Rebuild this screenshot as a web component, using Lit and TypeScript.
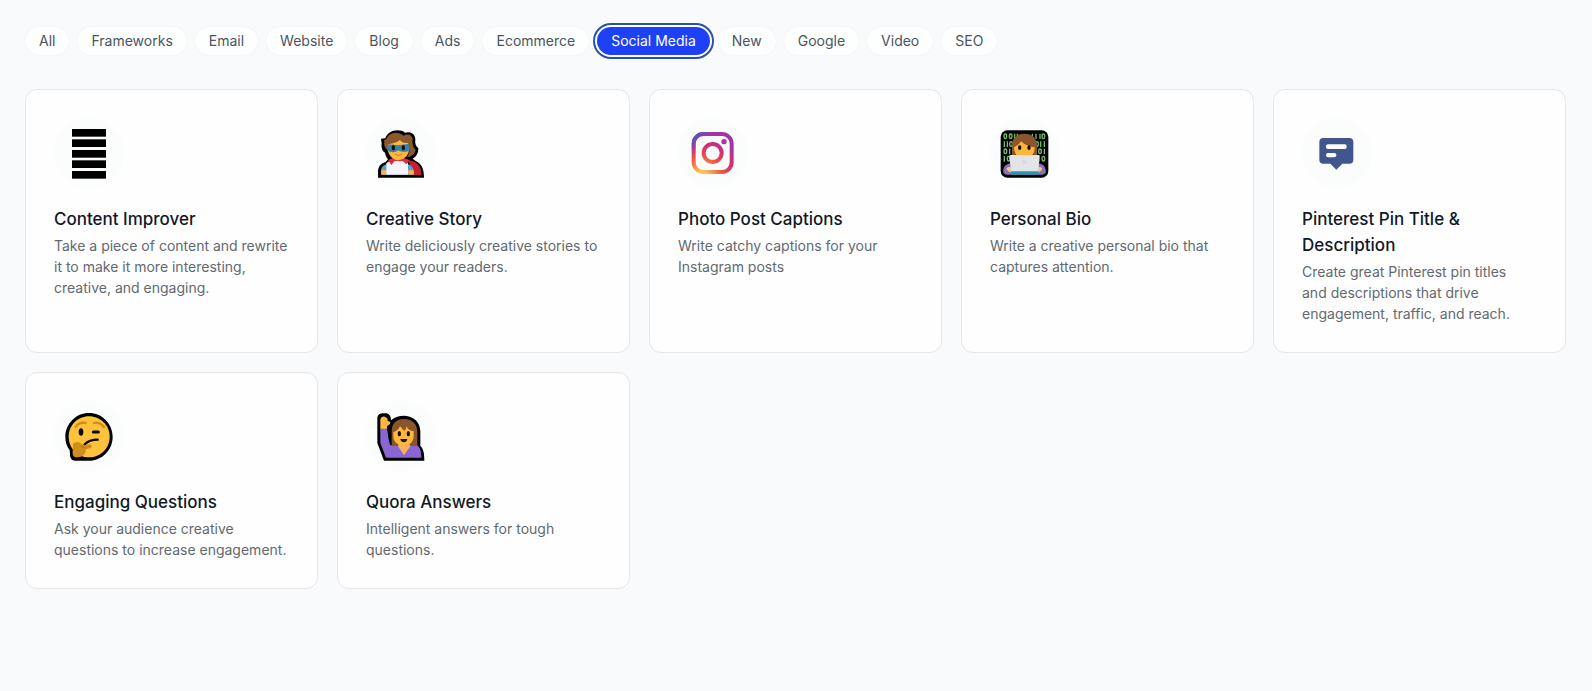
import { LitElement, html, css, svg } from "lit";
import { customElement, property, state } from "lit/decorators.js";
import { classMap } from "lit/directives/class-map.js";

interface Template {
  icon: string;
  title: string;
  text: string;
}

const CATEGORIES = [
  "All", "Frameworks", "Email", "Website", "Blog", "Ads",
  "Ecommerce", "Social Media", "New", "Google", "Video", "SEO",
];

const TEMPLATES: Template[] = [
  { icon: "bars", title: "Content Improver", text: "Take a piece of content and rewrite it to make it more interesting, creative, and engaging." },
  { icon: "hero", title: "Creative Story", text: "Write deliciously creative stories to engage your readers." },
  { icon: "instagram", title: "Photo Post Captions", text: "Write catchy captions for your Instagram posts" },
  { icon: "coder", title: "Personal Bio", text: "Write a creative personal bio that captures attention." },
  { icon: "pin", title: "Pinterest Pin Title & Description", text: "Create great Pinterest pin titles and\u00a0descriptions that drive engagement, traffic, and reach." },
  { icon: "thinking", title: "Engaging Questions", text: "Ask your audience creative questions to increase engagement." },
  { icon: "hand", title: "Quora Answers", text: "Intelligent answers for tough questions." },
];

// Each drawing has its own view box; all of them fill the same round badge.
const ICONS: Record<string, { box: string; art: unknown }> = {
  bars: {
    box: "102 114 210 210",
    art: svg`
      ${[147, 178, 210, 241, 273].map((y) => svg`<rect x="156" y=${y} width="102" height="23" fill="#000"/>`)}`,
  },
  hero: {
    box: "18 24 210 210",
    art: svg`
      <path d="M54 203V186C54 171 62 160 76 157L84 148C79 141 76 135 75 128C67 123 63 112 65 101L63 86L76 85C81 70 95 61 113 61C122 61 129 63 135 68C150 63 164 70 166 86C165 99 166 107 175 114C175 130 169 140 158 146L168 154C184 160 192 176 192 203Z" fill="#000"/>
      <path d="M146 151C172 155 184 168 184 195H162L150 168Z" fill="#c4202f"/>
      <path d="M63 194V183C63 170 72 163 86 162L100 155H132L148 164C157 167 162 177 162 194Z" fill="#5a9fd4"/>
      <path d="M64 181H79V194H64ZM145 181H161V194H145Z" fill="#fcb93c"/>
      <path d="M79 194V160L95 149H133L144 160V194Z" fill="#f4f5fc"/>
      <path d="M84 151L99 144H132L149 151L139 163L128 153H104L94 165Z" fill="#e02b3c"/>
      <path d="M82 98C88 86 102 80 119 80C137 81 148 94 148 112C148 135 135 149 114 151C96 149 83 132 82 113Z" fill="#fdb83b"/>
      <path d="M82 104C93 102 104 104 114 106C125 104 137 103 147 101L150 120C140 127 126 128 115 121C105 129 90 128 82 121Z" fill="#3b80ac"/>
      <path d="M70 92C78 89 81 83 85 77C96 67 116 64 130 77C142 70 157 73 158 88C157 103 158 111 167 119C164 132 154 140 141 142C150 130 151 114 145 99C132 100 124 96 120 90C108 100 94 99 82 105V119C72 112 72 103 73 93Z" fill="#8b572c"/>
      <ellipse cx="100" cy="113" rx="5" ry="8" fill="#101319"/>
      <ellipse cx="130" cy="113" rx="5" ry="8" fill="#101319"/>
      <path d="M105 133Q115 141 125 133" fill="none" stroke="#cf7f22" stroke-width="3" stroke-linecap="round"/>`,
  },
  instagram: {
    box: "25 24 210 210",
    art: svg`
      <defs>
        <radialGradient id="ig-warm" gradientUnits="userSpaceOnUse" cx="98" cy="201" r="130">
          <stop offset="0" stop-color="#fed55a"/><stop offset=".12" stop-color="#fcc455"/>
          <stop offset=".48" stop-color="#ee5245"/><stop offset=".72" stop-color="#d1316f"/>
          <stop offset="1" stop-color="#a433a8"/>
        </radialGradient>
        <radialGradient id="ig-cool" gradientUnits="userSpaceOnUse" cx="58" cy="66" r="72">
          <stop offset="0" stop-color="#3265cf"/><stop offset=".25" stop-color="#4759c9"/>
          <stop offset="1" stop-color="#8a38b5" stop-opacity="0"/>
        </radialGradient>
      </defs>
      ${["url(#ig-warm)", "url(#ig-cool)"].map((paint) => svg`
        <rect x="72" y="72" width="114" height="114" rx="29" fill="none" stroke=${paint} stroke-width="12"/>
        <circle cx="129" cy="129" r="27" fill="none" stroke=${paint} stroke-width="12"/>
        <circle cx="163" cy="95" r="8" fill=${paint}/>`)}`,
  },
  coder: {
    box: "17 24 210 210",
    art: svg`
      <rect x="49" y="61" width="143" height="142" rx="20" fill="#000"/>
      <g fill="none" stroke="#72bd68" stroke-width="4">
        <ellipse cx="63" cy="79" rx="4" ry="7"/><ellipse cx="79" cy="79" rx="4" ry="7"/>
        <path d="M91 71V87M99 71V87M144 71V87M155 71V87M167 71V87"/><ellipse cx="177" cy="79" rx="4" ry="7"/>
        <path d="M60 94V111M69 94V111M169 94V111M180 94V111"/><ellipse cx="80" cy="102" rx="4" ry="7"/><ellipse cx="158" cy="102" rx="4" ry="7"/>
        <ellipse cx="63" cy="124" rx="4" ry="7"/><path d="M76 116V133M180 116V133"/><ellipse cx="167" cy="124" rx="4" ry="7"/>
        <path d="M60 138V155M163 138V155"/><ellipse cx="73" cy="146" rx="4" ry="7"/><ellipse cx="177" cy="146" rx="4" ry="7"/>
      </g>
      <path d="M57 188C55 173 62 164 77 160H163C179 163 186 174 184 188C178 196 168 194 159 194H80C70 194 62 195 57 188Z" fill="#8d70b2"/>
      <path d="M83 138V106C83 83 98 71 120 71C144 71 158 85 158 108V138Z" fill="#8c552d"/>
      <path d="M89 112C98 107 107 101 110 93C118 103 132 109 151 112C151 130 143 143 120 145C99 143 89 130 89 112Z" fill="#fdb63a"/>
      <ellipse cx="106" cy="113" rx="5" ry="7" fill="#15100c"/>
      <ellipse cx="134" cy="113" rx="5" ry="7" fill="#15100c"/>
      <path d="M66 175Q76 166 87 178L83 189Q70 186 66 175ZM174 175Q165 166 154 178L158 189Q170 186 174 175Z" fill="#f8c787"/>
      <rect x="79" y="181" width="84" height="13" fill="#2798b4"/>
      <path d="M79 135H163Q166 135 166 138L162 184H80L75 138Q75 135 79 135Z" fill="#e3e4e8"/>
      <circle cx="120" cy="156" r="7" fill="#d9dbe0"/>`,
  },
  pin: {
    box: "113 114 210 210",
    art: svg`
      <path d="M177 174H255Q267 174 267 186V239Q267 251 255 251H234L216 269L198 251H177Q165 251 165 239V186Q165 174 177 174Z" fill="#40568d"/>
      <rect x="185" y="193" width="62" height="14" rx="6" fill="#fafcff"/>
      <rect x="185" y="219" width="31" height="13" rx="6" fill="#fafcff"/>`,
  },
  thinking: {
    box: "27 18 210 210",
    art: svg`
      <path d="M132 54C171 54 203 86 203 125C203 165 171 197 132 197H91C80 197 75 190 75 178L74 166C65 154 61 140 61 125C61 86 93 54 132 54Z" fill="#000"/>
      <path d="M132 64C166 64 194 91 194 125C194 160 166 187 132 187C97 187 71 159 71 125C71 91 98 64 132 64Z" fill="#fec33b"/>
      <path d="M92 96Q102 80 122 84M147 84Q163 79 177 96" fill="none" stroke="#d58b1a" stroke-width="7" stroke-linecap="round"/>
      <ellipse cx="108" cy="111" rx="7" ry="11" fill="#080808"/>
      <path d="M145 111H160" stroke="#080808" stroke-width="9" stroke-linecap="round"/>
      <path d="M119 148C128 139 138 134 158 134" fill="none" stroke="#080808" stroke-width="7" stroke-linecap="round"/>
      <path d="M84 147C91 139 102 139 108 146L120 151L135 148C141 149 142 155 138 159L122 163C124 178 111 188 95 187C84 187 82 179 83 169Z" fill="#d18e1b"/>
      <path d="M108 154L119 157" stroke="#b86f12" stroke-width="3" stroke-linecap="round"/>`,
  },
  hand: {
    box: "19 18 210 210",
    art: svg`
      <path d="M53 69C54 59 61 55 72 55H80C90 57 94 64 94 76C105 66 119 62 134 62C164 64 182 82 182 110V153C191 161 194 174 194 197H73L53 144Z" fill="#000"/>
      <path d="M62 100H82C85 118 86 137 92 151H172C181 156 185 169 185 188H79L62 144Z" fill="#8966d4"/>
      <path d="M62 74C63 66 69 64 75 65L83 70L84 78L92 80L91 87L82 94V101H62Z" fill="#fdb83d"/>
      <path d="M96 151V108C96 84 111 72 133 72C158 72 173 88 173 111V153H96Z" fill="#8b552b"/>
      <path d="M115 148H151V155L133 181L116 155Z" fill="#f6b35a"/>
      <path d="M101 112C112 108 118 101 121 94C129 101 128 105 135 107C139 104 139 99 140 94C146 105 152 107 162 109V123C162 139 152 151 132 152C112 151 101 139 101 123Z" fill="#feb93a"/>
      <ellipse cx="119" cy="116" rx="5" ry="8" fill="#160e08"/>
      <ellipse cx="146" cy="116" rx="5" ry="8" fill="#160e08"/>
      <path d="M122 132H143C141 145 124 145 122 132Z" fill="#20120c"/>`,
  },
};

@customElement("template-card")
export class TemplateCard extends LitElement {
  @property({ attribute: false }) item!: Template;

  static styles = css`
    :host { display: grid; }
    .card {
      box-sizing: border-box;
      padding: 28px;
      border: 1px solid #e5e7eb;
      border-radius: 12px;
      background: #fefefe;
      color: inherit;
      text-decoration: none;
    }
    .badge {
      display: block;
      width: 70px;
      height: 70px;
      margin-bottom: 18px;
      border-radius: 50%;
      background: #fbfcfc;
    }
    .title {
      margin: 0 0 3px;
      font-size: 17px;
      line-height: 26px;
      font-weight: 500;
      color: #111827;
    }
    .text {
      margin: 0;
      font-size: 14px;
      line-height: 21px;
      color: #626970;
    }
  `;

  render() {
    const { box, art } = ICONS[this.item.icon];
    return html`
      <a class="card" href="#">
        <svg class="badge" viewBox=${box} aria-hidden="true">${art}</svg>
        <h3 class="title">${this.item.title}</h3>
        <p class="text">${this.item.text}</p>
      </a>
    `;
  }
}

@customElement("app-root")
export class AppRoot extends LitElement {
  @state() private selected = "Social Media";

  static styles = css`
    :host {
      display: block;
      box-sizing: border-box;
      min-height: 100vh;
      padding: 27px 26px 26px 25px;
      background: #f9fafc;
      font-family: Inter, "Liberation Sans", sans-serif;
    }
    .filters {
      display: flex;
      flex-wrap: wrap;
      gap: 8px;
      margin-bottom: 34px;
    }
    .pill {
      padding: 4px 14px;
      border: 0;
      border-radius: 14px;
      background: #fdfefe;
      box-shadow: 0 0 1px rgb(0 0 0 / 10%);
      color: #4b5560;
      font: 400 14px/20px Inter, "Liberation Sans", sans-serif;
      cursor: pointer;
    }
    .pill.active {
      background: #1f41f5;
      box-shadow: 0 0 0 2px #fff, 0 0 0 4px #2850ae;
      color: #fff;
    }
    .grid {
      display: grid;
      grid-template-columns: repeat(auto-fill, minmax(280px, 1fr));
      gap: 19px;
    }
  `;

  render() {
    return html`
      <nav class="filters" aria-label="Categories">
        ${CATEGORIES.map((name) => html`
          <button
            type="button"
            class=${classMap({ pill: true, active: name === this.selected })}
            aria-pressed=${name === this.selected}
            @click=${() => (this.selected = name)}
          >${name}</button>`)}
      </nav>
      <main class="grid">
        ${TEMPLATES.map((item) => html`<template-card .item=${item}></template-card>`)}
      </main>
    `;
  }
}
